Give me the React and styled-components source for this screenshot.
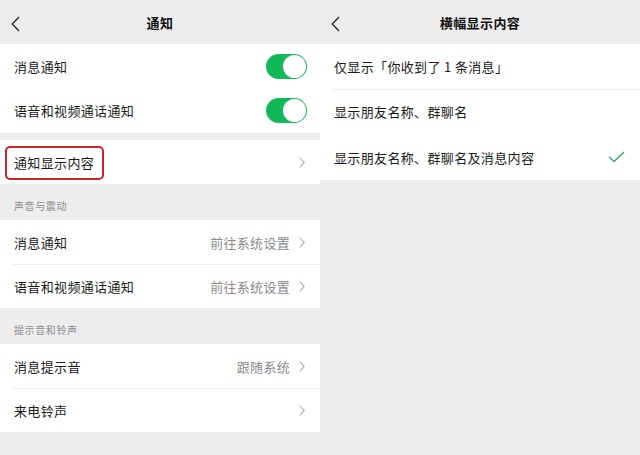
import React from "react";
import styled, { createGlobalStyle } from "styled-components";

const Global = createGlobalStyle`
  html, body { margin: 0; padding: 0; }
  body {
    background: #ededed;
    font-family: "Noto Sans CJK SC", "Noto Sans", sans-serif;
    color: #1a1a1a;
  }
`;

const Screen = styled.div`
  display: flex;
  width: 640px;
  height: 455px;
  overflow: hidden;
  background: #ededed;
`;

const Panel = styled.div`
  width: 320px;
  flex: 0 0 320px;
  display: flex;
  flex-direction: column;
  background: #ededed;
`;

const NavBar = styled.div`
  position: relative;
  height: 44px;
  display: flex;
  align-items: center;
  justify-content: center;
  flex: 0 0 44px;
`;

const Back = styled.svg`
  position: absolute;
  left: 11px;
  top: 16px;
`;

const Title = styled.div`
  font-size: 13px;
  font-weight: 700;
  letter-spacing: 0.4px;
  color: #111;
`;

const Group = styled.div`
  background: #fff;
  margin-top: ${(p) => p.$mt || 0}px;
`;

const Row = styled.div`
  position: relative;
  height: ${(p) => p.$h || 44}px;
  display: flex;
  align-items: center;
  padding: 0 15px 0 14px;
  & + & {
    border-top: 0;
  }
  & + &::before {
    content: "";
    position: absolute;
    left: 13px;
    right: 0;
    top: 0;
    height: 1px;
    background: #ececec;
  }
`;

const Label = styled.div`
  flex: 1;
  font-size: 13px;
  letter-spacing: 0.35px;
  color: #1a1a1a;
`;

const Value = styled.div`
  font-size: 13px;
  letter-spacing: 0.3px;
  color: #8a8a8a;
  margin-right: 9px;
`;

const SectionHeader = styled.div`
  height: 36px;
  box-sizing: border-box;
  padding: 7px 14px 0;
  display: flex;
  align-items: center;
  font-size: 10px;
  letter-spacing: 0.6px;
  color: #8d8d8d;
`;

const Highlight = styled.div`
  position: absolute;
  left: 5px;
  top: 6px;
  width: 99px;
  height: 34px;
  box-sizing: border-box;
  border: 2px solid #c9222e;
  border-radius: 5px;
  pointer-events: none;
`;

const Track = styled.div`
  position: relative;
  width: 41px;
  height: 25px;
  border-radius: 13px;
  background: #12b958;
  margin-right: -2px;
`;

const Knob = styled.div`
  position: absolute;
  right: 1px;
  top: 1px;
  width: 23px;
  height: 23px;
  border-radius: 50%;
  background: #fff;
`;

const Toggle = () => (
  <Track>
    <Knob />
  </Track>
);

const Chevron = () => (
  <svg width="6" height="11" viewBox="0 0 6 11">
    <path d="M0.7 0.7 L5.2 5.5 L0.7 10.3" fill="none" stroke="#b3b3b3" strokeWidth="1.1" />
  </svg>
);

const BackIcon = () => (
  <Back width="9" height="16" viewBox="0 0 9 16">
    <path d="M8 1 L1.3 8 L8 15" fill="none" stroke="#2b2b2b" strokeWidth="1.4" />
  </Back>
);

const Check = () => (
  <svg width="17" height="12" viewBox="0 0 17 12" style={{ marginRight: 0 }}>
    <path d="M1 5.8 L6 10.6 L16 1" fill="none" stroke="#3ea56a" strokeWidth="1.4" />
  </svg>
);

export default function App() {
  return (
    <>
      <Global />
      <Screen>
        <Panel>
          <NavBar>
            <BackIcon />
            <Title>通知</Title>
          </NavBar>
          <Group>
            <Row $h={44}>
              <Label>消息通知</Label>
              <Toggle />
            </Row>
            <Row $h={45}>
              <Label>语音和视频通话通知</Label>
              <Toggle />
            </Row>
          </Group>
          <Group $mt={7}>
            <Row>
              <Label>通知显示内容</Label>
              <Chevron />
              <Highlight />
            </Row>
          </Group>
          <SectionHeader>声音与震动</SectionHeader>
          <Group>
            <Row>
              <Label>消息通知</Label>
              <Value>前往系统设置</Value>
              <Chevron />
            </Row>
            <Row>
              <Label>语音和视频通话通知</Label>
              <Value>前往系统设置</Value>
              <Chevron />
            </Row>
          </Group>
          <SectionHeader>提示音和铃声</SectionHeader>
          <Group>
            <Row>
              <Label>消息提示音</Label>
              <Value>跟随系统</Value>
              <Chevron />
            </Row>
            <Row>
              <Label>来电铃声</Label>
              <Chevron />
            </Row>
          </Group>
        </Panel>
        <Panel>
          <NavBar>
            <BackIcon />
            <Title>横幅显示内容</Title>
          </NavBar>
          <Group>
            <Row $h={45}>
              <Label>仅显示「你收到了 1 条消息」</Label>
            </Row>
            <Row $h={45}>
              <Label>显示朋友名称、群聊名</Label>
            </Row>
            <Row $h={46}>
              <Label>显示朋友名称、群聊名及消息内容</Label>
              <Check />
            </Row>
          </Group>
        </Panel>
      </Screen>
    </>
  );
}
